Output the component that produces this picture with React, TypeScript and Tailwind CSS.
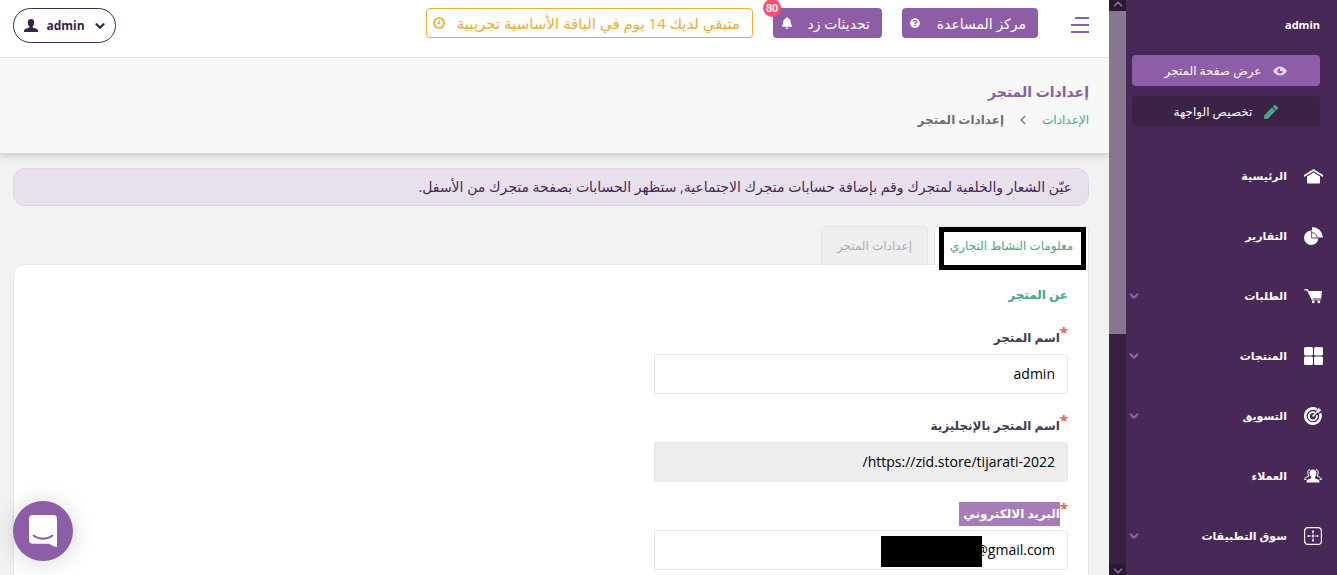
import React, { useState } from 'react';
import { ChevronDown, ChevronLeft, ChevronUp } from 'lucide-react';
import { FaBell, FaPen, FaQuestionCircle } from 'react-icons/fa';

interface NavItem {
  label: string;
  icon: React.ReactNode;
  hasChildren?: boolean;
}

const EyeIcon = () => (
  <svg viewBox="0 0 14 10" className="w-3.5 h-2.5">
    <path d="M0 5c3.500-6 10.500-6 14 0-3.500 6-10.500 6-14 0z" fill="#e6cff0" />
    <path d="M7 2.500A2.500 2.500 0 1 0 9.500 5H7z" fill="#8e5da7" />
  </svg>
);

const HomeIcon = () => (
  <svg viewBox="0 0 19 15" className="w-[19px] h-[15px]" fill="currentColor">
    <path d="M9.500 0 19 6v2L9.500 2.300 0 8V6z" />
    <path d="M9.500 3.400 16 7.400V13.600a1 1 0 0 1-1 1H4a1 1 0 0 1-1-1V7.400z" />
  </svg>
);

const PieIcon = () => (
  <svg viewBox="0 0 19 18" className="w-[19px] h-[18px]" fill="currentColor">
    <circle cx="7.200" cy="10.800" r="7.200" />
    <path d="M8 0a11 11 0 0 1 11 10.500H8z" />
    <path d="M7.600 4v7h7.400M7.600 5.500a6 6 0 0 1 5.600 5.500" fill="none" stroke="#482856" strokeWidth="0.8" />
  </svg>
);

const CartIcon = () => (
  <svg viewBox="0 0 18 15" className="w-[18px] h-[15px]" fill="currentColor">
    <path d="M0 .4 3.300 0l1.600 2H18l-.8 7.500H8.500l.5 1h8v.8H8L3 1.500.4 1.600z" />
    <circle cx="9.300" cy="12.900" r="1.400" />
    <circle cx="14.800" cy="12.900" r="1.400" />
  </svg>
);

const GridIcon = () => (
  <svg viewBox="0 0 19 18" className="w-[19px] h-[18px]" fill="currentColor">
    <rect width="9" height="8.500" rx="1.500" />
    <rect x="10" width="9" height="8.500" rx="1.500" />
    <rect y="9.500" width="9" height="8.500" rx="1.500" />
    <rect x="10" y="9.500" width="9" height="8.500" rx="1.500" />
  </svg>
);

const TargetIcon = () => (
  <svg viewBox="0 0 18 18" className="w-[18px] h-[18px]" fill="none" stroke="currentColor">
    <path d="M12.800 2.500A7.600 7.600 0 1 0 16 6.300" strokeWidth="2.600" />
    <path d="M11 5.800A4.100 4.100 0 1 0 12.800 8.200" strokeWidth="1.900" />
    <path d="M8.500 9.500 14 4" strokeWidth="1.600" />
    <path d="M12.500 3.200 15.200.4l.4 2 2 .4-2.800 2.700-2-.3z" fill="currentColor" stroke="none" />
  </svg>
);

const CustomersIcon = () => (
  <svg viewBox="0 0 18 14" className="w-[18px] h-[14px]" fill="currentColor">
    <path d="M9 .5c2.300 0 3.500 1.600 3.500 3.800 0 1.700-.7 2.900-1.600 3.700v1.300l3.600 1.500c.9.400 1 1.300 1 2.700h-13c0-1.400.1-2.300 1-2.700l3.600-1.500V8c-.9-.8-1.600-2-1.600-3.700C5.500 2.100 6.700.5 9 .5z" />
    <path
      d="M6 .7C4.300.4 3.600 1.900 3.900 4.300c.1 1.400.6 2 .9 2.700L1.500 8.700C.7 9.100.6 9.700.6 10.500h1.800M12 .7c1.700-.3 2.400 1.200 2.100 3.600-.1 1.400-.6 2-.9 2.700l3.300 1.700c.8.400.9 1 .9 1.800h-1.800"
      fill="none"
      stroke="currentColor"
    />
  </svg>
);

const AppsIcon = () => (
  <svg viewBox="0 0 18 18" className="w-[18px] h-[18px]" fill="none" stroke="currentColor">
    <rect x=".6" y=".6" width="16.800" height="16.800" rx="3.500" strokeWidth="1.200" />
    <path d="M9 3.500v11M3.500 9h11" strokeWidth="1.200" strokeDasharray="3 1" />
    <path d="M8 4.500h2M8 13.500h2M4.500 8v2M13.500 8v2" strokeWidth="1" />
  </svg>
);

const UserIcon = () => (
  <svg viewBox="0 0 14 13" className="w-[14px] h-[13px]" fill="currentColor">
    <path d="M7 0c2.300 0 3.300 1.500 3.200 3.500 0 1.600-.6 2.900-1.500 3.700v1.300l4.100 1.400c1 .4 1.200 1.300 1.200 3.100H0c0-1.800.2-2.700 1.200-3.100l4.100-1.400V7.200C4.400 6.400 3.800 5.100 3.800 3.500 3.700 1.500 4.700 0 7 0z" />
  </svg>
);

const ClockIcon = () => (
  <svg viewBox="0 0 12 12" className="w-3 h-3" fill="none" stroke="currentColor">
    <circle cx="6" cy="6" r="5" strokeWidth="1.700" />
    <path d="M6.400 3.200v3.200H4" strokeWidth="1.100" />
  </svg>
);

const navItems: NavItem[] = [
  { label: 'الرئيسية', icon: <HomeIcon /> },
  { label: 'التقارير', icon: <PieIcon /> },
  { label: 'الطلبات', icon: <CartIcon />, hasChildren: true },
  { label: 'المنتجات', icon: <GridIcon />, hasChildren: true },
  { label: 'التسويق', icon: <TargetIcon />, hasChildren: true },
  { label: 'العملاء', icon: <CustomersIcon /> },
  { label: 'سوق التطبيقات', icon: <AppsIcon />, hasChildren: true },
];

const Sidebar = () => (
  <aside className="w-[211px] shrink-0 bg-[#482856] text-white">
    <div className="pr-[17px] pl-1.5">
      <p className="pt-4 h-[55px] text-[11px] leading-[18px] font-bold">admin</p>
      <button className="w-full h-[31px] rounded bg-[#8e5da7] flex items-center justify-center gap-3 text-[12px]">
        <EyeIcon />
        عرض صفحة المتجر
      </button>
      <button className="mt-2.5 w-full h-[31px] rounded bg-[#3b2247] flex items-center justify-center gap-3 text-[12px]">
        <FaPen className="w-3.5 h-3.5 text-[#44a985]" />
        تخصيص الواجهة
      </button>
    </div>
    <nav className="mt-[19px]">
      {navItems.map((item) => (
        <a key={item.label} href="#" className="flex items-center h-[60px] pr-3.5 pl-px">
          <span className="w-5 flex justify-center">{item.icon}</span>
          <span className="mr-4 grow text-[11px] font-bold whitespace-nowrap">{item.label}</span>
          {item.hasChildren && <ChevronDown className="w-3.5 h-3.5 text-[#8e5da7]" strokeWidth={4} />}
        </a>
      ))}
    </nav>
  </aside>
);

const ScrollBar = () => (
  <div className="w-[17px] shrink-0 bg-[#382043] flex flex-col justify-between items-center" aria-hidden="true">
    <div className="w-full h-[58%] flex flex-col">
      <span className="h-[11px] bg-[#2b1834] flex justify-center items-end overflow-hidden">
        <ChevronUp className="w-3.5 h-3.5 shrink-0 text-[#85788c]" strokeWidth={3} />
      </span>
      <span className="grow bg-[#86778e]" />
    </div>
    <span className="w-full h-[11px] bg-[#2b1834] flex justify-center items-start overflow-hidden">
      <ChevronDown className="w-3.5 h-3.5 shrink-0 text-[#85788c]" strokeWidth={3} />
    </span>
  </div>
);

const Header = () => (
  <header className="relative z-10 h-[58px] shrink-0 bg-white border-b border-[#e4e4e4] flex items-start pt-2 pr-5 pl-[13px] whitespace-nowrap">
    <button aria-label="القائمة" className="mt-2 ml-8 w-[19px] h-[18px] text-[#8e5da7]">
      <svg viewBox="0 0 19 18" className="w-[19px] h-[18px]" fill="currentColor">
        <path d="M5 1h14v2H5zM1 8h18v2H1zM1 15h18v2H1z" />
      </svg>
    </button>
    <div className="flex gap-5 text-[14px]">
      <button className="w-[136px] h-[30px] pr-3 pl-2 rounded bg-[#8e5da7] text-white flex items-center justify-between">
        مركز المساعدة
        <FaQuestionCircle className="w-2.5 h-2.5" />
      </button>
      <button className="relative w-[109px] h-[30px] pr-3 pl-2 rounded bg-[#8e5da7] text-white flex items-center justify-between">
        تحديثات زد
        <FaBell className="w-3 h-3" />
        <span className="absolute -top-[9px] -left-2.5 w-[18px] h-[18px] rounded-full bg-[#ff4f69] flex items-center justify-center font-['Liberation_Sans'] text-[11px] font-bold">
          80
        </span>
      </button>
      <button className="w-[327px] h-[30px] pr-3 pl-1.5 rounded border border-[#f4ab2d] text-[15px] text-[#f4ab2d] flex items-center justify-between">
        متبقي لديك 14 يوم في الباقة الأساسية تجريبية
        <ClockIcon />
      </button>
    </div>
    <button className="mr-auto w-[103px] h-[35px] pr-2 pl-2.5 rounded-full border border-[#482856] text-[#3b2247] flex items-center justify-between text-[12px] font-bold">
      <ChevronDown className="w-3.5 h-3.5" strokeWidth={4} />
      admin
      <UserIcon />
    </button>
  </header>
);

const PageHeading = () => (
  <div className="relative h-[95px] shrink-0 bg-[#f8f8f8] shadow-[0_2px_8px_rgba(0,0,0,0.2)] px-5 pt-[22px]">
    <h1 className="text-[14px] leading-6 font-bold text-[#8e5da7]">إعدادات المتجر</h1>
    <div className="mt-1 flex items-center text-[12px] leading-6">
      <a href="#" className="text-[#44a985]">الإعدادات</a>
      <ChevronLeft className="mx-3 w-3.5 h-3.5 text-[#888888]" strokeWidth={3} />
      <span className="font-bold text-[#6e6e6e]">إعدادات المتجر</span>
    </div>
  </div>
);

interface FieldProps {
  id: string;
  label: string;
  value: string;
  highlighted?: boolean;
  disabled?: boolean;
  ltr?: boolean;
  children?: React.ReactNode;
}

const Field: React.FC<FieldProps> = ({ id, label, value, highlighted, disabled, ltr, children }) => {
  const [text, setText] = useState(value);

  return (
    <div className="w-2/5">
      <label htmlFor={id} className="flex items-center h-6 text-[12px] leading-6 font-bold text-[#44395a]">
        <span className="self-start text-[15px] leading-3 text-[#f0595a]">*</span>
        <span className={highlighted ? 'bg-[#a67cb9] text-white pl-1' : ''}>{label}</span>
      </label>
      <div className="relative mt-1">
        <input
          id={id}
          type="text"
          dir={ltr ? 'ltr' : 'rtl'}
          value={text}
          disabled={disabled}
          onChange={(e) => setText(e.target.value)}
          className="block w-full h-10 px-3 pb-0.5 rounded-r border border-[#e6e6e6] bg-white disabled:bg-[#ededed] text-right text-[14px] text-black"
        />
        {children}
      </div>
    </div>
  );
};

export default function App() {
  return (
    <div
      dir="rtl"
      className="flex h-screen overflow-hidden bg-[#f2f2f2] font-['Open_Sans','DejaVu_Sans',sans-serif]"
    >
      <Sidebar />
      <ScrollBar />

      <div className="flex flex-col grow min-w-0 overflow-hidden">
        <Header />
        <PageHeading />

        <main className="flex flex-col grow pt-[15px] pr-5 pl-[13px]">
          <p className="h-[38px] shrink-0 rounded-xl border border-[#e0d2e8] bg-[#e9e0ee] px-4 text-[14px] leading-9 text-[#482856] whitespace-nowrap">
            عيّن الشعار والخلفية لمتجرك وقم بإضافة حسابات متجرك الاجتماعية, ستظهر الحسابات بصفحة متجرك من الأسفل.
          </p>

          {/* Tabs */}
          <div className="relative z-10 mt-5 -mb-px flex gap-1.5 text-[12px] whitespace-nowrap">
            <button className="relative w-[155px] h-[39px] rounded-t border border-b-0 border-[#e6e6ea] bg-white text-[#44a985]">
              معلومات النشاط التجاري
              <span className="absolute top-0 -bottom-[5px] left-1 right-0.5 border-5 border-black" />
            </button>
            <button className="w-[107px] h-[39px] rounded-t border border-[#e6e6ea] bg-[#efefef] text-[#abadb9]">
              إعدادات المتجر
            </button>
          </div>

          <section className="grow rounded-tl-xl border border-b-0 border-[#e6e6ee] bg-white px-5 pt-[18px]">
            <h2 className="text-[12px] leading-6 font-bold text-[#44a985]">عن المتجر</h2>
            <div className="mt-[19px] flex flex-col gap-5">
              <Field id="store-name" label="اسم المتجر" value="admin" />
              <Field
                id="store-name-en"
                label="اسم المتجر بالإنجليزية"
                value="https://zid.store/tijarati-2022/"
                disabled
              />
              <Field id="email" label="البريد الالكتروني" value="@gmail.com" highlighted ltr>
                <span className="absolute top-1.5 right-[86px] w-[101px] h-[31px] bg-black" />
              </Field>
            </div>
          </section>
        </main>
      </div>

      <button
        aria-label="الدردشة"
        className="fixed left-[13px] bottom-3.5 w-[60px] h-[60px] rounded-full bg-[#8e5da7] shadow-[0_2px_24px_rgba(0,0,0,0.16)] flex items-center justify-center"
      >
        <svg viewBox="0 0 28 32" className="w-7 h-8" fill="none">
          <path d="M4 0h20a4 4 0 0 1 4 4v28c-3-.6-5.500-1.800-8-3.300H4a4 4 0 0 1-4-4V4a4 4 0 0 1 4-4z" fill="#fff" />
          <path d="M4.500 20.500c5.500 4.300 13.500 4.300 19 0" stroke="#8e5da7" strokeWidth="1.800" strokeLinecap="round" />
        </svg>
      </button>
    </div>
  );
}
